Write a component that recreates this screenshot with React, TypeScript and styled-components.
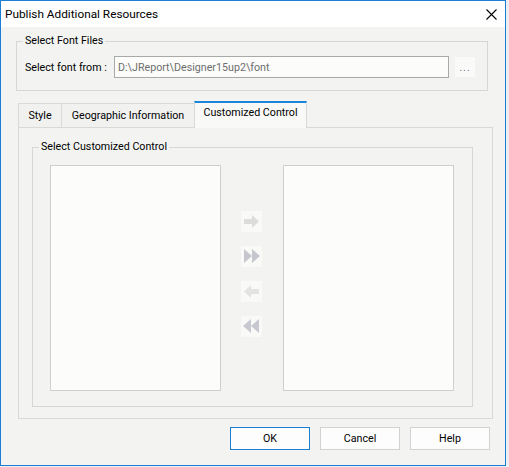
import React from "react";
import styled, { createGlobalStyle } from "styled-components";

const GlobalStyle = createGlobalStyle`
  html, body {
    margin: 0;
    padding: 0;
    background: #eceef0;
  }
  body {
    font-family: Roboto, "Noto Sans", sans-serif;
    font-size: 10.7px;
    color: #000;
  }
`;

const Window = styled.div`
  width: 506px;
  height: 466px;
  box-sizing: border-box;
  border: 1px solid #1a7fd4;
  background: #f3f4f2;
  display: flex;
  flex-direction: column;
`;

const TitleBar = styled.div`
  height: 26px;
  background: #fff;
  display: flex;
  align-items: center;
  justify-content: space-between;
  padding: 0 8px 0 4px;
`;

const Title = styled.span`
  font-size: 11.8px;
  padding-bottom: 1px;
`;

const Body = styled.div`
  flex: 1;
  display: flex;
  flex-direction: column;
  padding: 14px 15px 0 15px;
`;

const Group = styled.div<{ w: number; h: number }>`
  position: relative;
  box-sizing: border-box;
  width: ${(p) => p.w}px;
  height: ${(p) => p.h}px;
  border: 1px solid #d7d8d6;
`;

const Legend = styled.span`
  position: absolute;
  top: -9px;
  left: 6px;
  padding: 0 2px;
  background: #f3f4f2;
  line-height: 16px;
  white-space: nowrap;
`;

const FontRow = styled.div`
  display: flex;
  align-items: center;
  padding: 14px 0 0 8px;
`;

const FieldLabel = styled.span`
  width: 89px;
  flex-shrink: 0;
  white-space: nowrap;
`;

const PathField = styled.div`
  box-sizing: border-box;
  width: 335px;
  height: 22px;
  flex-shrink: 0;
  border: 1px solid #a9aaa8;
  background: #fcfdfb;
  color: #6d6d6d;
  padding-left: 3px;
  display: flex;
  align-items: center;
  white-space: nowrap;
`;

const BrowseButton = styled.div`
  width: 20px;
  height: 20px;
  flex-shrink: 0;
  margin-left: 6px;
  background: #fafbf9;
  color: #7c7390;
  display: flex;
  align-items: center;
  justify-content: center;
  font-size: 11px;
  letter-spacing: 1px;
`;

const TabBar = styled.div`
  display: flex;
  align-items: flex-end;
  height: 26px;
  margin: 10px 0 0 2px;
`;

const Tab = styled.div<{ w: number; active?: boolean }>`
  box-sizing: border-box;
  width: ${(p) => p.w}px;
  height: ${(p) => (p.active ? 27 : 24)}px;
  margin-bottom: ${(p) => (p.active ? -1 : 0)}px;
  margin-left: -1px;
  border: 1px solid #d9dad8;
  border-bottom: none;
  border-top: ${(p) => (p.active ? "2px solid #1a86d8" : "1px solid #d9dad8")};
  background: ${(p) => (p.active ? "#f9faf8" : "#f1f2f0")};
  display: flex;
  justify-content: center;
  padding-top: ${(p) => (p.active ? 3 : 5)}px;
  white-space: nowrap;
  position: relative;
  z-index: ${(p) => (p.active ? 1 : 0)};
  &:first-child {
    margin-left: 0;
  }
`;

const TabPanel = styled.div`
  box-sizing: border-box;
  width: 475px;
  height: 292px;
  margin-left: 2px;
  border: 1px solid #d9dad8;
  padding: 19px 0 0 13px;
`;

const ListRow = styled.div`
  display: flex;
  padding: 17px 0 0 17px;
`;

const ListBox = styled.div`
  box-sizing: border-box;
  width: 171px;
  height: 226px;
  border: 1px solid #cfd0ce;
  background: #fcfdfb;
`;

const ArrowColumn = styled.div`
  display: flex;
  flex-direction: column;
  gap: 14px;
  margin: 46px 21px 0 20px;
`;

const ArrowButton = styled.div`
  width: 21px;
  height: 21px;
  background: #f9faf8;
  display: flex;
  align-items: center;
  justify-content: center;
`;

const ButtonRow = styled.div`
  display: flex;
  justify-content: flex-end;
  gap: 10px;
  margin-top: 8px;
`;

const DialogButton = styled.div<{ primary?: boolean }>`
  box-sizing: border-box;
  width: 80px;
  height: 23px;
  border: 1px solid ${(p) => (p.primary ? "#1a7fd4" : "#d2d3d1")};
  background: #fdfdfd;
  display: flex;
  align-items: center;
  justify-content: center;
`;

const CloseIcon = () => (
  <svg width="11" height="11" viewBox="0 0 11 11">
    <path d="M0.5 0.5 L10.5 10.5 M10.5 0.5 L0.5 10.5" stroke="#000" strokeWidth="1.1" />
  </svg>
);

const SingleArrow = ({ left, color }: { left?: boolean; color: string }) => (
  <svg width="21" height="21" viewBox="0 0 21 21">
    <path
      d="M3 8 H11 V4 L18 10.5 L11 17 V13 H3 Z"
      fill={color}
      transform={left ? "translate(21 0) scale(-1 1)" : undefined}
    />
  </svg>
);

const DoubleArrow = ({ left, color }: { left?: boolean; color: string }) => (
  <svg width="21" height="21" viewBox="0 0 21 21">
    <path
      d="M3 3 L11 10 L3 17 Z M11 3 L19 10 L11 17 Z"
      fill={color}
      transform={left ? "translate(21 0) scale(-1 1)" : undefined}
    />
  </svg>
);

export default function App() {
  return (
    <>
      <GlobalStyle />
      <Window>
        <TitleBar>
          <Title>Publish Additional Resources</Title>
          <CloseIcon />
        </TitleBar>
        <Body>
          <Group w={472} h={50}>
            <Legend>Select Font Files</Legend>
            <FontRow>
              <FieldLabel>Select font from :</FieldLabel>
              <PathField>D:\JReport\Designer15up2\font</PathField>
              <BrowseButton>...</BrowseButton>
            </FontRow>
          </Group>

          <TabBar>
            <Tab w={44}>Style</Tab>
            <Tab w={134}>Geographic Information</Tab>
            <Tab w={113} active>
              Customized Control
            </Tab>
          </TabBar>
          <TabPanel>
            <Group w={441} h={260}>
              <Legend>Select Customized Control</Legend>
              <ListRow>
                <ListBox />
                <ArrowColumn>
                  <ArrowButton>
                    <SingleArrow color="#dcdddb" />
                  </ArrowButton>
                  <ArrowButton>
                    <DoubleArrow color="#c6c6ce" />
                  </ArrowButton>
                  <ArrowButton>
                    <SingleArrow left color="#e3e4e2" />
                  </ArrowButton>
                  <ArrowButton>
                    <DoubleArrow left color="#c8c8d0" />
                  </ArrowButton>
                </ArrowColumn>
                <ListBox />
              </ListRow>
            </Group>
          </TabPanel>

          <ButtonRow>
            <DialogButton primary>OK</DialogButton>
            <DialogButton>Cancel</DialogButton>
            <DialogButton>Help</DialogButton>
          </ButtonRow>
        </Body>
      </Window>
    </>
  );
}
